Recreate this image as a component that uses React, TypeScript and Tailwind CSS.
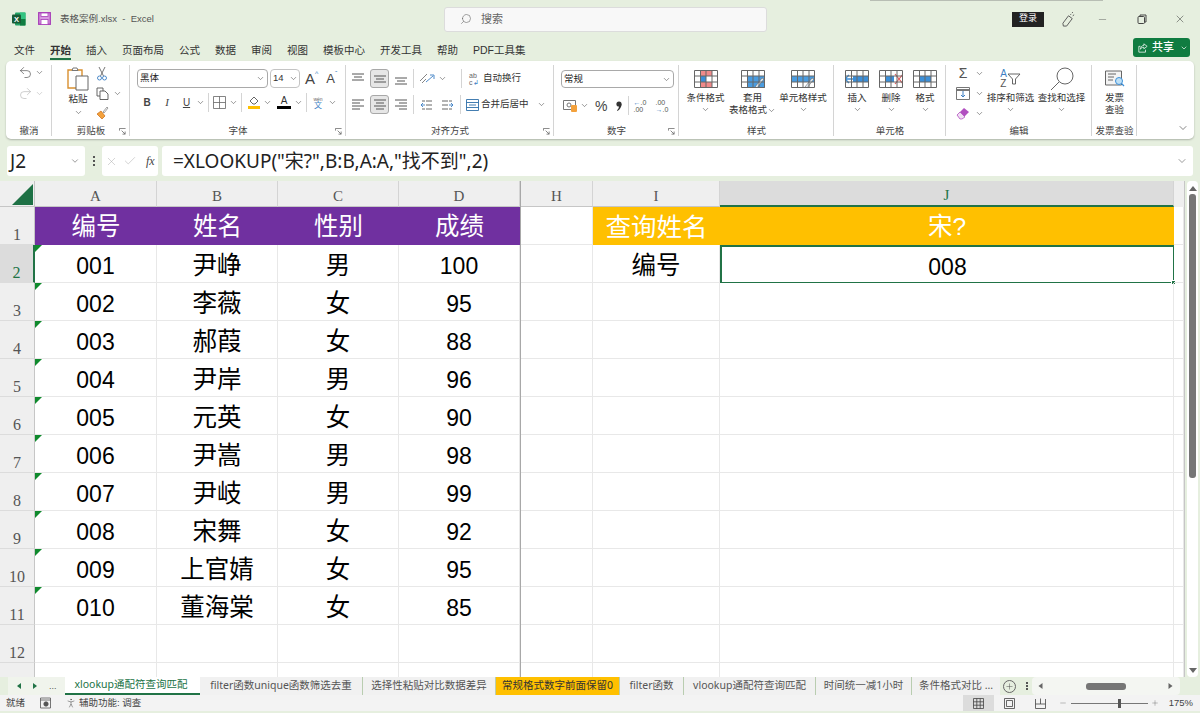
import type { ReactNode } from "react";
import { Check, ChevronDown, Minus, PersonStanding, Plus, Redo2, Search, Undo2, X } from "lucide-react";

type Row = { no: string; name: string; sex: string; score: string };

const rows: Row[] = [
  { no: "001", name: "尹峥", sex: "男", score: "100" },
  { no: "002", name: "李薇", sex: "女", score: "95" },
  { no: "003", name: "郝葭", sex: "女", score: "88" },
  { no: "004", name: "尹岸", sex: "男", score: "96" },
  { no: "005", name: "元英", sex: "女", score: "90" },
  { no: "006", name: "尹嵩", sex: "男", score: "98" },
  { no: "007", name: "尹岐", sex: "男", score: "99" },
  { no: "008", name: "宋舞", sex: "女", score: "92" },
  { no: "009", name: "上官婧", sex: "女", score: "95" },
  { no: "010", name: "董海棠", sex: "女", score: "85" },
];

const menu = ["文件", "开始", "插入", "页面布局", "公式", "数据", "审阅", "视图", "模板中心", "开发工具", "帮助", "PDF工具集"];

const gridCols = "grid grid-cols-[35px_122px_121px_121px_121px_1px_72px_127px_454px_10px]";

function Chev({ className = "" }: { className?: string }) {
  return <ChevronDown size={9} strokeWidth={1.6} className={`shrink-0 text-[#555] ${className}`} />;
}

function Group({ className, label, launcher, children }: { className: string; label: string; launcher?: boolean; children: ReactNode }) {
  return (
    <div className={`relative flex h-full shrink-0 flex-col ${className}`}>
      <div className="min-h-0 flex-1">{children}</div>
      <div className="h-[15px] text-center text-[9.5px] leading-[13px] whitespace-nowrap text-[#444]">{label}</div>
      <div className="absolute top-[4px] right-0 bottom-[3px] w-px bg-[#d4d4d4]" />
      {launcher && (
        <svg viewBox="0 0 8 8" className="absolute right-[4px] bottom-[4px] h-[7px] w-[7px]" fill="none" stroke="#666" strokeWidth="0.9">
          <path d="M.5 3V.5H7.5M3 3l4 4M7 4v3H4" />
        </svg>
      )}
    </div>
  );
}

function Sep() {
  return <div className="mx-[3px] h-[19px] w-px shrink-0 bg-[#d4d4d4]" />;
}

function Lines({ kind }: { kind: "top" | "mid" | "bottom" | "left" | "center" | "right" }) {
  const d = {
    top: "M1 2h12M3 5h8M1 8h12",
    mid: "M1 4h12M3 7h8M1 10h12",
    bottom: "M1 6h12M3 9h8M1 12h12",
    left: "M1 2h12M1 5h8M1 8h12M1 11h8",
    center: "M1 2h12M3 5h8M1 8h12M3 11h8",
    right: "M1 2h12M5 5h8M1 8h12M5 11h8",
  }[kind];
  return (
    <svg viewBox="0 0 14 14" className="h-[14px] w-[14px]" fill="none" stroke="#555" strokeWidth="1">
      <path d={d} />
    </svg>
  );
}

function AlignBtn({ kind, active }: { kind: "top" | "mid" | "bottom" | "left" | "center" | "right"; active?: boolean }) {
  return (
    <div className={`flex h-[19px] w-[19px] items-center justify-center rounded-[3px] ${active ? "border border-[#a8a8a8] bg-[#e6e6e6]" : ""}`}>
      <Lines kind={kind} />
    </div>
  );
}

function GridIcon({ children, className = "" }: { children?: ReactNode; className?: string }) {
  return (
    <svg viewBox="0 0 24 18" className={`h-[18px] w-[24px] ${className}`} fill="none">
      {children}
      <path d="M.5.5h23v17H.5zM.5 6h23M.5 12h23M6.5.5v17M12 .5v17M18 .5v17" stroke="#666" strokeWidth="1" />
    </svg>
  );
}

function BigBtn({ icon, lines, chev = "below", className = "" }: { icon: ReactNode; lines: string[]; chev?: "below" | "inline" | "none"; className?: string }) {
  return (
    <div className={`flex flex-col items-center pt-[8px] text-[9.5px] leading-[12px] text-[#333] ${className}`}>
      <div className="flex h-[20px] items-center">{icon}</div>
      <div className="mt-[3px] whitespace-nowrap text-center">{lines[0]}</div>
      {lines[1] ? (
        <div className="flex items-center whitespace-nowrap">
          {lines[1]}
          {chev === "inline" && <Chev />}
        </div>
      ) : null}
      {chev === "below" && <Chev className="mt-[1px]" />}
    </div>
  );
}

function SheetTab({ className, label, active, amber }: { className: string; label: string; active?: boolean; amber?: boolean }) {
  const look = active
    ? "border-b-2 border-[#217346] bg-white text-[#217346]"
    : amber
      ? "bg-[#ffc000] text-[#333] border-r border-[#b9cdb0]"
      : "border-r border-[#b9cdb0] text-[#555]";
  return <div className={`flex h-full shrink-0 items-center justify-center whitespace-nowrap [font-family:'Noto_Sans','Noto_Sans_CJK_SC',sans-serif] text-[10.5px] ${look} ${className}`}>{label}</div>;
}

function HeaderCell({ label, active }: { label: string; active?: boolean }) {
  return (
    <div className={`flex h-[26px] items-center justify-center border-r border-[#d4d4d4] pt-[5px] [font-family:'Liberation_Serif',serif] text-[15px] ${active ? "border-b-2 border-b-[#217346] bg-[#dcdcdc] text-[#217346]" : "border-b border-b-[#c6c6c6] bg-[#efefef] text-[#555]"}`}>
      {label}
    </div>
  );
}

function RowHead({ n, active }: { n?: number; active?: boolean }) {
  return (
    <div className={`flex h-[38px] items-end justify-center border-b border-b-[#dcdcdc] [font-family:'Liberation_Serif',serif] text-[16px] leading-[18px] ${active ? "border-r-2 border-r-[#217346] bg-[#dcdcdc] text-[#217346]" : "border-r border-r-[#c6c6c6] bg-[#efefef] text-[#555]"}`}>
      {n}
    </div>
  );
}

function Cell({ children, className = "", flag, size = "text-[24.5px]" }: { children?: ReactNode; className?: string; flag?: boolean; size?: string }) {
  return (
    <div className={`relative flex h-[38px] items-center justify-center overflow-visible border-r border-b border-[#e8e8e8] pt-[6px] ${size} text-black ${className}`}>
      {flag && <div className="absolute top-0 left-0 h-0 w-0 border-t-[7px] border-r-[7px] border-t-[#0f8a2d] border-r-transparent" />}
      {children}
    </div>
  );
}

function EmptyRow({ n }: { n?: number }) {
  return (
    <>
      <RowHead n={n} />
      <Cell />
      <Cell />
      <Cell />
      <Cell />
      <div className="h-[38px] bg-[#a8a8a8]" />
      <Cell />
      <Cell />
      <Cell />
      <Cell />
    </>
  );
}

export default function App() {
  return (
    <div className="flex h-[713px] w-[1200px] flex-col overflow-hidden bg-[#e6efdf] [font-family:'Liberation_Sans','Noto_Sans_CJK_SC',sans-serif]">
      {/* title bar */}
      <div className="relative flex h-[38px] shrink-0 items-center text-[#555]">
        <div className="absolute top-0 left-[870px] h-px w-[233px] bg-[#b8beb4]" />
        <svg viewBox="0 0 14 14" className="mb-[1px] ml-[12px] h-[14px] w-[14px]">
          <rect x="3" y="0.5" width="10.5" height="13" rx="1" fill="#21a366" />
          <rect x="8" y="0.5" width="5.5" height="6.5" fill="#33c481" />
          <rect x="8" y="7" width="5.5" height="6.5" fill="#107c41" />
          <rect x="0" y="2.5" width="9" height="9" rx="1" fill="#185c37" />
          <text x="4.5" y="9.7" textAnchor="middle" fontSize="7.5" fontWeight="700" fill="#fff">X</text>
        </svg>
        <svg viewBox="0 0 13 13" className="mb-[1px] ml-[12px] h-[13px] w-[13px]" fill="none">
          <rect x="0.7" y="0.7" width="11.6" height="11.6" fill="#d79ae0" stroke="#a83fb8" strokeWidth="1.3" />
          <rect x="3" y="1" width="7" height="3.5" fill="#fff" stroke="#a83fb8" strokeWidth="0.8" />
          <rect x="3" y="7.5" width="7" height="5" fill="#fff" stroke="#a83fb8" strokeWidth="0.8" />
        </svg>
        <div className="ml-[9px] text-[9.5px] whitespace-nowrap">表格案例.xlsx&nbsp; -&nbsp; Excel</div>
        <div className="ml-[290px] flex h-[25px] w-[323px] items-center rounded-[3px] border border-[#dcdcdc] bg-[#f8f8f8] text-[11px] text-[#666]">
          <Search size={12} strokeWidth={1.2} className="ml-[15px] -scale-x-100" />
          <span className="ml-[9px]">搜索</span>
        </div>
        <div className="ml-[245px] flex h-[15px] w-[32px] items-center justify-center bg-[#222] text-[9px] text-white">登录</div>
        <svg viewBox="0 0 16 16" className="ml-[17px] h-[15px] w-[15px]" fill="none" stroke="#555" strokeWidth="1">
          <path d="M2 12l6-8 4 3-6 8H2.5zM10 3l1-1M12.5 4l1.5-1M12 1l.5-1" />
        </svg>
        <Minus size={11} strokeWidth={1} className="ml-[21px]" />
        <svg viewBox="0 0 10 10" className="ml-[29px] h-[10px] w-[10px]" fill="none" stroke="#444" strokeWidth="1">
          <rect x="1" y="2.5" width="6.5" height="7" rx="1" />
          <path d="M3 2.5V1h6v7H7.5" />
        </svg>
        <X size={12} strokeWidth={1} className="ml-[27px] text-[#333]" />
      </div>

      {/* menu */}
      <div className="flex h-[23px] shrink-0 items-center pl-[14px] text-[10.5px] text-[#333]">
        <div className="flex gap-[15px] pt-[2px]">
          {menu.map((m) => (
            <div key={m} className={`relative whitespace-nowrap ${m === "开始" ? "font-bold" : ""}`}>
              {m}
              {m === "开始" && <div className="absolute right-0 -bottom-[2px] left-0 h-[2px] bg-[#217346]" />}
            </div>
          ))}
        </div>
        <div className="ml-auto mr-[10px] mb-[4px] flex h-[19px] w-[57px] items-center rounded-[3px] bg-[#107c41] text-[11px] text-white">
          <svg viewBox="0 0 12 12" className="ml-[5px] h-[10px] w-[10px]" fill="none" stroke="#fff" strokeWidth="0.9">
            <path d="M7 1l4 3-4 3V5.200C4.500 5.200 3.500 6 3 7.500 3 5 4.500 3 7 3zM9 8v3H1V4h2" />
          </svg>
          <span className="ml-[4px] font-medium">共享</span>
          <ChevronDown size={8} className="ml-[6px]" />
        </div>
      </div>

      {/* ribbon */}
      <div className="mx-[6px] flex h-[78px] shrink-0 rounded-[5px] bg-white shadow-[0_1px_2px_rgba(0,0,0,0.25)]">
        <Group className="w-[46px]" label="撤消">
          <div className="flex flex-col gap-[6px] pt-[4px] pl-[12px] text-[#555]">
            <div className="flex items-center gap-[2px]">
              <Undo2 size={15} strokeWidth={1.1} />
              <Chev />
            </div>
            <div className="flex items-center gap-[2px] opacity-40">
              <Redo2 size={15} strokeWidth={1.1} />
              <Chev />
            </div>
          </div>
        </Group>

        <Group className="w-[78px]" label="剪贴板" launcher>
          <div className="flex pl-[15px] pt-[6px]">
            <div className="flex flex-col items-center text-[9.5px] leading-[12px] text-[#333]">
              <svg viewBox="0 0 22 24" className="h-[24px] w-[22px]" fill="none">
                <path d="M1 3h14v18H1z" fill="#fff" stroke="#d9902f" strokeWidth="1.400" />
                <path d="M5 3.500 6 1h4l1 2.500z" fill="#fff" stroke="#777" />
                <path d="M9 9h12v14H9z" fill="#fff" stroke="#666" />
              </svg>
              <div className="mt-[2px]">粘贴</div>
              <Chev className="mt-[3px]" />
            </div>
            <div className="ml-[7px] flex flex-col items-start gap-[6px]">
              <svg viewBox="0 0 12 14" className="h-[14px] w-[12px]" fill="none" strokeWidth="0.9">
                <path d="M3 0l4.500 9M9 0 4.500 9" stroke="#666" />
                <circle cx="3.500" cy="11" r="2" stroke="#3c7fc4" />
                <circle cx="8.500" cy="11" r="2" stroke="#3c7fc4" />
              </svg>
              <div className="flex items-center gap-[4px]">
                <svg viewBox="0 0 13 13" className="h-[13px] w-[13px]" fill="#fff" stroke="#555" strokeWidth="0.9">
                  <path d="M1 1h6v8H1z" />
                  <path d="M4 4h5l3 3v5.500H4z" />
                </svg>
                <Chev />
              </div>
              <svg viewBox="0 0 13 13" className="h-[13px] w-[13px]" fill="none">
                <path d="M1 8l4-3 4 5-3 3z" fill="#f3a13c" stroke="#c86a12" strokeWidth="0.7" />
                <path d="M7 6l4-5 1 1-4 5z" fill="#fff" stroke="#777" strokeWidth="0.7" />
              </svg>
            </div>
          </div>
        </Group>

        <Group className="w-[216px]" label="字体" launcher>
          <div className="flex flex-col pt-[8px] pl-[7px]">
            <div className="flex items-center gap-[2px]">
              <div className="flex h-[19px] w-[131px] items-center justify-between rounded-[4px] border border-[#a9a9a9] px-[2px] text-[9.5px] text-[#222]">
                黑体
                <Chev />
              </div>
              <div className="flex h-[19px] w-[30px] items-center justify-between rounded-[4px] border border-[#c4c4c4] pl-[2px] pr-[1px] text-[9.5px] text-[#333]">
                14
                <Chev />
              </div>
              <div className="ml-[3px] flex items-start text-[15px] leading-[17px] text-[#444]">
                A<span className="text-[7px] leading-[8px] text-[#3c7fc4]">^</span>
              </div>
              <div className="ml-[6px] flex items-start text-[13px] leading-[17px] text-[#444]">
                A<span className="text-[7px] leading-[8px] text-[#3c7fc4]">ˇ</span>
              </div>
            </div>
            <div className="mt-[5px] flex items-center text-[#444]">
              <span className="w-[20px] text-center text-[10px] font-bold">B</span>
              <span className="w-[20px] text-center [font-family:'Liberation_Serif',serif] text-[11px] italic">I</span>
              <span className="w-[19px] text-center text-[10px] underline">U</span>
              <Chev />
              <Sep />
              <svg viewBox="0 0 13 13" className="ml-[1px] h-[13px] w-[13px]" fill="none" stroke="#666" strokeWidth="0.8">
                <path d="M.5.5h12v12H.5zM.5 6.500h12M6.500.5v12" />
              </svg>
              <Chev className="ml-[3px]" />
              <Sep />
              <div className="ml-[2px] flex w-[13px] flex-col items-center">
                <svg viewBox="0 0 12 10" className="h-[10px] w-[12px]" fill="none" stroke="#555" strokeWidth="0.9">
                  <path d="M2 5l4-4 4 4-3 3H5z" />
                </svg>
                <div className="h-[3px] w-[12px] bg-[#ffc000]" />
              </div>
              <Chev className="ml-[3px]" />
              <div className="ml-[5px] flex w-[14px] flex-col items-center text-[10px] leading-[10px] text-[#333]">
                A
                <div className="h-[3px] w-[14px] bg-black" />
              </div>
              <Chev className="ml-[3px]" />
              <Sep />
              <div className="ml-[2px] flex w-[12px] flex-col items-center text-[5px] leading-[6px] text-[#666]">
                wén
                <span className="text-[8px] leading-[8px] text-[#3c7fc4]">文</span>
              </div>
              <Chev className="ml-[4px]" />
            </div>
          </div>
        </Group>

        <Group className="w-[208px]" label="对齐方式" launcher>
          <div className="flex flex-col gap-[7px] pt-[8px] pl-[2px] text-[9.5px] text-[#333]">
            <div className="flex items-center">
              <AlignBtn kind="top" />
              <div className="w-[3px]" />
              <AlignBtn kind="mid" active />
              <div className="w-[2px]" />
              <AlignBtn kind="bottom" />
              <Sep />
              <svg viewBox="0 0 16 13" className="ml-[2px] h-[13px] w-[16px]" fill="none" strokeWidth="0.9">
                <path d="M1 9l7-7M3 11l4-4" stroke="#777" />
                <path d="M7 10l7-6M11 3h4v4" stroke="#3c7fc4" />
              </svg>
              <Chev className="ml-[3px]" />
              <div className="ml-[11px]"><Sep /></div>
              <span className="ml-[4px] w-[13px] text-[7px] leading-[7px] text-[#666]">ab<br />c<span className="text-[#3c7fc4]">↲</span></span>
              <span className="ml-[1px] whitespace-nowrap">自动换行</span>
            </div>
            <div className="flex items-center">
              <AlignBtn kind="left" />
              <div className="w-[3px]" />
              <AlignBtn kind="center" active />
              <div className="w-[2px]" />
              <AlignBtn kind="right" />
              <Sep />
              <svg viewBox="0 0 12 12" className="ml-[4px] h-[12px] w-[12px]" fill="none" strokeWidth="0.9">
                <path d="M5 2h6M5 6h6M5 10h6M1 2h3M1 10h3" stroke="#555" />
                <path d="M4 6H0M2 4 0 6l2 2" stroke="#3c7fc4" />
              </svg>
              <svg viewBox="0 0 12 12" className="ml-[8px] h-[12px] w-[12px]" fill="none" strokeWidth="0.9">
                <path d="M1 2h6M1 6h6M1 10h6M8 2h3M8 10h3" stroke="#555" />
                <path d="M8 6h4M10 4l2 2-2 2" stroke="#3c7fc4" />
              </svg>
              <div className="ml-[4px]"><Sep /></div>
              <svg viewBox="0 0 13 12" className="ml-[2px] h-[12px] w-[13px]" fill="none" stroke="#2f6fa8" strokeWidth="0.9">
                <path d="M.5.5h12v11H.5zM.5 3.500h12M.5 8.500h12M3 6h7" />
              </svg>
              <span className="ml-[2px] whitespace-nowrap">合并后居中</span>
              <Chev className="ml-[8px]" />
            </div>
          </div>
        </Group>

        <Group className="w-[125px]" label="数字" launcher>
          <div className="flex flex-col pt-[9px] pl-[7px]">
            <div className="flex h-[18px] w-[113px] items-center justify-between rounded-[4px] border border-[#a9a9a9] px-[2px] text-[9.5px] text-[#222]">
              常规
              <Chev />
            </div>
            <div className="mt-[8px] flex items-center pl-[2px] text-[#444]">
              <svg viewBox="0 0 14 13" className="h-[13px] w-[14px]" fill="none">
                <path d="M.5 1.500h12v9H.5z" stroke="#777" />
                <circle cx="6" cy="6" r="2" stroke="#777" />
                <rect x="8" y="6" width="6" height="7" rx="1" fill="#f3a13c" />
              </svg>
              <Chev className="ml-[3px]" />
              <span className="ml-[6px] text-[14px] leading-[14px]">%</span>
              <svg viewBox="0 0 6 10" className="ml-[9px] h-[10px] w-[6px]" fill="#333">
                <circle cx="3" cy="3" r="2.600" />
                <path d="M5.500 3C5.500 6 4 8.500 1.500 10L1 9.300C2.500 8 3 6.500 3 5z" />
              </svg>
              <div className="ml-[3px]"><Sep /></div>
              <div className="ml-[1px] w-[15px] text-[7px] leading-[7px] text-[#555]">
                <span className="text-[#3c7fc4]">←</span>.0<br />.00
              </div>
              <div className="ml-[7px] w-[15px] text-[7px] leading-[7px] text-[#555]">
                .00<br /><span className="text-[#3c7fc4]">→</span>.0
              </div>
            </div>
          </div>
        </Group>

        <Group className="w-[155px]" label="样式">
          <div className="flex pl-[8px]">
            <BigBtn
              className="w-[37px]"
              lines={["条件格式"]}
              icon={
                <GridIcon>
                  <rect x="6" y="0" width="12" height="6" fill="#f08a8a" />
                  <rect x="6" y="6" width="6" height="6" fill="#3c8fd8" />
                  <rect x="12" y="6" width="6" height="6" fill="#fff" />
                  <rect x="6" y="12" width="12" height="6" fill="#f08a8a" />
                </GridIcon>
              }
            />
            <BigBtn
              className="ml-[5px] w-[47px]"
              lines={["套用", "表格格式"]}
              chev="inline"
              icon={
                <GridIcon>
                  <rect x="6" y="6" width="18" height="12" fill="#4a9ce0" />
                  <path d="M14 17l7-9 2 1-7 9z" fill="#dfe8ef" stroke="#555" strokeWidth="0.5" />
                </GridIcon>
              }
            />
            <BigBtn
              className="ml-[4px] w-[46px]"
              lines={["单元格样式"]}
              icon={
                <GridIcon>
                  <rect x="1" y="6" width="22" height="6" fill="#4a9ce0" />
                  <path d="M14 17l7-9 2 1-7 9z" fill="#dfe8ef" stroke="#555" strokeWidth="0.5" />
                </GridIcon>
              }
            />
          </div>
        </Group>

        <Group className="w-[112px]" label="单元格">
          <div className="flex pl-[11px]">
            <BigBtn
              className="w-[24px]"
              lines={["插入"]}
              icon={
                <GridIcon>
                  <rect x="8" y="6" width="15" height="6" fill="#3c8fd8" />
                  <path d="M10 9H0M4 5 0 9l4 4" stroke="#3c8fd8" strokeWidth="1.300" />
                </GridIcon>
              }
            />
            <BigBtn
              className="ml-[10px] w-[24px]"
              lines={["删除"]}
              icon={
                <GridIcon>
                  <rect x="6" y="6" width="9" height="6" fill="#3c8fd8" />
                  <path d="M16 4l8 10M24 4l-8 10" stroke="#e05a5a" strokeWidth="1.100" />
                </GridIcon>
              }
            />
            <BigBtn
              className="ml-[10px] w-[24px]"
              lines={["格式"]}
              icon={
                <GridIcon>
                  <rect x="6" y="6" width="12" height="6" fill="#3c8fd8" />
                </GridIcon>
              }
            />
          </div>
        </Group>

        <Group className="w-[146px]" label="编辑">
          <div className="flex pl-[10px]">
            <div className="flex flex-col gap-[6px] pt-[5px] text-[#555]">
              <div className="flex h-[14px] items-center gap-[5px]">
                <span className="w-[14px] text-center text-[14px] leading-[14px]">Σ</span>
                <Chev />
              </div>
              <div className="flex h-[14px] items-center gap-[5px]">
                <svg viewBox="0 0 14 13" className="h-[13px] w-[14px]" fill="none">
                  <path d="M.5.5h13v12H.5z" stroke="#777" />
                  <path d="M.5 3h13" stroke="#777" strokeWidth="2" />
                  <path d="M7 4v6M5 8l2 2 2-2" stroke="#3c7fc4" />
                </svg>
                <Chev />
              </div>
              <div className="flex h-[14px] items-center gap-[5px]">
                <svg viewBox="0 0 14 13" className="h-[13px] w-[14px]" fill="none">
                  <path d="M1 8l7-7 5 4-7 7H4z" fill="#b14fc0" />
                  <path d="M4 5l5 5-3 2H4L1 8z" fill="#f0dff3" stroke="#b14fc0" strokeWidth="0.7" />
                </svg>
                <Chev />
              </div>
            </div>
            <BigBtn
              className="ml-[3px] w-[47px]"
              lines={["排序和筛选"]}
              icon={
                <div className="flex items-center">
                  <div className="flex flex-col text-[10px] leading-[10px]">
                    <span className="text-[#3c7fc4]">A</span>
                    <span className="text-[#555]">Z</span>
                  </div>
                  <svg viewBox="0 0 14 12" className="h-[12px] w-[14px]" fill="none" stroke="#555" strokeWidth="0.9">
                    <path d="M1 1h12L8.500 6v5H5.500V6z" />
                  </svg>
                </div>
              }
            />
            <BigBtn
              className="ml-[4px] w-[47px]"
              lines={["查找和选择"]}
              icon={
                <svg viewBox="0 0 24 24" className="h-[24px] w-[24px]" fill="none" stroke="#555" strokeWidth="0.9">
                  <circle cx="15" cy="9" r="8" />
                  <path d="M9 15l-8 8" />
                </svg>
              }
            />
          </div>
        </Group>

        <Group className="w-[45px]" label="发票查验">
          <div className="flex justify-center">
            <BigBtn
              lines={["发票", "查验"]}
              chev="none"
              icon={
                <svg viewBox="0 0 20 18" className="h-[18px] w-[20px]" fill="none">
                  <path d="M.5 1h16v14H.5z" fill="#f3f3f3" stroke="#666" />
                  <path d="M3 4h8M3 7h6M3 10h5" stroke="#666" />
                  <circle cx="14" cy="11" r="3.500" fill="#bfe0f5" stroke="#3c8fd8" />
                  <path d="M16.500 13.500 19 16" stroke="#3c8fd8" strokeWidth="1.300" />
                </svg>
              }
            />
          </div>
        </Group>

        <div className="flex flex-1 items-end justify-end pr-[5px] pb-[5px]">
          <ChevronDown size={12} strokeWidth={1.3} className="text-[#444]" />
        </div>
      </div>

      {/* formula bar */}
      <div className="mt-[7px] flex h-[30px] shrink-0 items-stretch pl-[7px] pr-[7px] [font-family:'Noto_Sans','Noto_Sans_CJK_SC',sans-serif]">
        <div className="flex w-[78px] items-center justify-between rounded-[3px] bg-white pl-[3px] pr-[5px] text-[19px] text-[#222]">
          J2
          <ChevronDown size={10} strokeWidth={1.4} className="text-[#555]" />
        </div>
        <div className="flex w-[17px] flex-col items-center justify-center gap-[2px]">
          <div className="h-[2px] w-[2px] bg-[#555]" />
          <div className="h-[2px] w-[2px] bg-[#555]" />
          <div className="h-[2px] w-[2px] bg-[#555]" />
        </div>
        <div className="flex w-[56px] items-center rounded-[3px] bg-white pl-[3px]">
          <X size={13} strokeWidth={0.9} className="text-[#aaa]" />
          <Check size={14} strokeWidth={0.9} className="ml-[5px] text-[#aaa]" />
          <span className="ml-[9px] [font-family:'Liberation_Serif',serif] text-[12px] italic text-[#444]">fx</span>
        </div>
        <div className="ml-[4px] flex flex-1 items-center justify-between rounded-[3px] bg-white pl-[11px] pr-[5px] text-[19px] text-[#222]">
          <span>=XLOOKUP("宋?",B:B,A:A,"找不到",2)</span>
          <ChevronDown size={12} strokeWidth={1.2} className="text-[#555]" />
        </div>
      </div>

      {/* sheet */}
      <div className="mt-[5px] flex h-[496px] shrink-0">
        <div className="relative h-full w-[1184px] overflow-hidden bg-white">
          <div className={gridCols}>
            <div className="relative h-[26px] border-r border-b border-[#c6c6c6] bg-[#efefef]">
              <svg viewBox="0 0 21 21" className="absolute top-[3px] left-[12px] h-[21px] w-[21px]">
                <path d="M21 0v21H0z" fill="#1e7145" />
              </svg>
            </div>
            <HeaderCell label="A" />
            <HeaderCell label="B" />
            <HeaderCell label="C" />
            <HeaderCell label="D" />
            <div className="h-[26px] bg-[#a8a8a8]" />
            <HeaderCell label="H" />
            <HeaderCell label="I" />
            <HeaderCell label="J" active />
            <div className="h-[26px] bg-[#efefef]" />

            <RowHead n={1} />
            <Cell className="border-r-0 border-b-0 !pt-[2px] bg-[#7030a0] !text-white">编号</Cell>
            <Cell className="border-r-0 border-b-0 !pt-[2px] bg-[#7030a0] !text-white">姓名</Cell>
            <Cell className="border-r-0 border-b-0 !pt-[2px] bg-[#7030a0] !text-white">性别</Cell>
            <Cell className="border-r-0 border-b-0 !pt-[2px] bg-[#7030a0] !text-white">成绩</Cell>
            <div className="h-[38px] bg-[#a8a8a8]" />
            <Cell />
            <Cell className="border-r-0 border-b-0 !pt-[2px] bg-[#ffc000] !text-white" size="text-[25.5px]">查询姓名</Cell>
            <Cell className="border-r-0 border-b-0 !pt-[2px] bg-[#ffc000] !text-white">宋?</Cell>
            <Cell />

            {rows.map((r, i) => (
              <div key={r.no} className="contents">
                <RowHead n={i + 2} active={i === 0} />
                <Cell flag size="text-[23px]">{r.no}</Cell>
                <Cell>{r.name}</Cell>
                <Cell>{r.sex}</Cell>
                <Cell size="text-[23px]">{r.score}</Cell>
                <div className="h-[38px] bg-[#a8a8a8]" />
                <Cell />
                <Cell>{i === 0 ? "编号" : ""}</Cell>
                {i === 0 ? (
                  <Cell className="border-2 !border-[#217346]" size="text-[23px]">
                    008
                    <div className="absolute -right-[3px] -bottom-[3px] h-[5px] w-[5px] border border-white bg-[#217346]" />
                  </Cell>
                ) : (
                  <Cell />
                )}
                <Cell />
              </div>
            ))}
            <EmptyRow n={12} />
            <EmptyRow />
          </div>
        </div>
        {/* vertical scroll */}
        <div className="w-[16px] border-l border-[#c6c6c6] pl-[2px]">
          <div className="flex h-full w-[11px] flex-col items-center rounded-[4px] bg-white">
            <svg viewBox="0 0 8 5" className="mt-[5px] h-[5px] w-[8px]"><path d="M0 5h8L4 0z" fill="#666" /></svg>
            <div className="mt-[3px] h-[284px] w-[7px] rounded-[3px] bg-[#767676]" />
            <svg viewBox="0 0 8 5" className="mt-auto mb-[4px] h-[5px] w-[8px]"><path d="M0 0h8L4 5z" fill="#666" /></svg>
          </div>
        </div>
      </div>

      {/* sheet tabs */}
      <div className="flex h-[18px] shrink-0 items-stretch">
        <div className="ml-[8px] flex w-[57px] items-center gap-[12px] bg-[#f0f4ec] pl-[9px] text-[#217346]">
          <svg viewBox="0 0 4 6" className="h-[6px] w-[4px]"><path d="M4 0v6L0 3z" fill="currentColor" /></svg>
          <svg viewBox="0 0 4 6" className="h-[6px] w-[4px]"><path d="M0 0v6l4-3z" fill="currentColor" /></svg>
          <span className="text-[9px] leading-[9px] text-[#555]">...</span>
        </div>
        <div className="flex w-[935px] bg-[#f1f1f1]">
          <SheetTab className="w-[135px] pr-[3px]" label="xlookup通配符查询匹配" active />
          <SheetTab className="w-[163px]" label="filter函数unique函数筛选去重" />
          <SheetTab className="w-[133px]" label="选择性粘贴对比数据差异" />
          <SheetTab className="w-[124px]" label="常规格式数字前面保留0" amber />
          <SheetTab className="w-[64px]" label="filter函数" />
          <SheetTab className="w-[132px]" label="vlookup通配符查询匹配" />
          <SheetTab className="w-[96px]" label="时间统一减1小时" />
          <SheetTab className="w-[88px] border-r-0" label="条件格式对比 ..." />
        </div>
        <div className="flex w-[18px] items-center justify-center">
          <div className="flex h-[13px] w-[13px] items-center justify-center rounded-full border border-[#666]">
            <Plus size={9} strokeWidth={1.2} className="text-[#444]" />
          </div>
        </div>
        <div className="ml-[5px] flex w-[8px] flex-col items-center justify-center gap-[1px]">
          <div className="h-[2px] w-[2px] bg-[#555]" />
          <div className="h-[2px] w-[2px] bg-[#555]" />
          <div className="h-[2px] w-[2px] bg-[#555]" />
        </div>
        <div className="ml-[1px] flex w-[148px] items-center rounded-[4px] bg-[#f4f6f2]">
          <svg viewBox="0 0 4 6" className="ml-[6px] h-[6px] w-[5px]"><path d="M4 0v6L0 3z" fill="#666" /></svg>
          <div className="ml-[43px] h-[7px] w-[40px] rounded-[3px] bg-[#767676]" />
          <svg viewBox="0 0 4 6" className="ml-auto mr-[7px] h-[6px] w-[5px]"><path d="M0 0v6l4-3z" fill="#666" /></svg>
        </div>
      </div>

      {/* status bar */}
      <div className="flex h-[16px] shrink-0 items-center bg-[#f3f3f3] pl-[6px] text-[9.5px] text-[#444]">
        <span className="w-[34px]">就绪</span>
        <svg viewBox="0 0 11 12" className="h-[12px] w-[11px]" fill="none" stroke="#555" strokeWidth="0.8">
          <path d="M.5 1h10v10H.5zM.5 3h10" />
          <circle cx="6" cy="7" r="2.200" fill="#555" />
        </svg>
        <PersonStanding size={12} strokeWidth={1} className="ml-[14px]" />
        <span className="ml-[2px] whitespace-nowrap">辅助功能: 调查</span>
        <div className="ml-auto flex h-full w-[31px] items-center justify-center bg-[#dcdcdc]">
          <svg viewBox="0 0 11 11" className="h-[11px] w-[11px]" fill="none" stroke="#444" strokeWidth="0.8">
            <path d="M.5.5h10v10H.5zM.5 3.800h10M.5 7.200h10M3.800.5v10M7.200.5v10" />
          </svg>
        </div>
        <svg viewBox="0 0 11 11" className="ml-[10px] h-[11px] w-[11px]" fill="none" stroke="#444" strokeWidth="0.8">
          <path d="M.5.5h10v10H.5zM2.500 2.500h6v6h-6z" />
        </svg>
        <svg viewBox="0 0 11 11" className="ml-[20px] h-[11px] w-[11px]" fill="none" stroke="#444" strokeWidth="0.8">
          <path d="M.5 1v9.500h10V1M.5 6h5V.5M5.500 6h5" />
        </svg>
        <Minus size={8} strokeWidth={1} className="ml-[13px]" />
        <div className="relative ml-[4px] h-px w-[77px] bg-[#777]">
          <div className="absolute -top-[4px] left-[47px] h-[9px] w-[3px] bg-[#555]" />
        </div>
        <Plus size={8} strokeWidth={1} className="ml-[3px]" />
        <span className="ml-[10px] mr-[7px]">175%</span>
      </div>
    </div>
  );
}
